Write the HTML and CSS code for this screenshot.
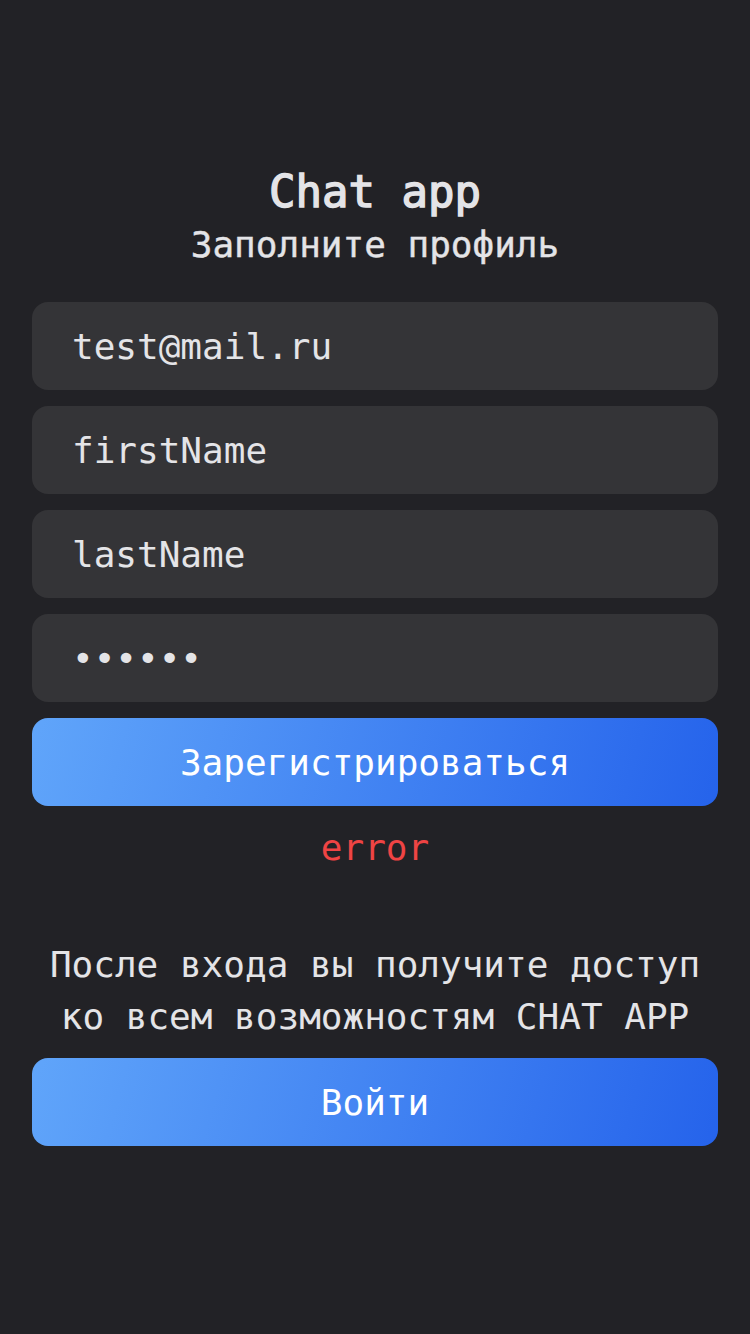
FILE: index.html
```html
<!DOCTYPE html>
<html lang="ru">
<head>
<meta charset="utf-8">
<title>Chat app</title>
<link rel="stylesheet" href="styles.css">
</head>
<body>
<main class="page">
  <form class="card">
    <h1 class="title">Chat app</h1>
    <h2 class="subtitle">Заполните профиль</h2>
    <div class="fields">
      <input class="field" type="text" value="test@mail.ru">
      <input class="field" type="text" value="firstName">
      <input class="field" type="text" value="lastName">
      <input class="field" type="password" value="123456">
      <button class="btn" type="button">Зарегистрироваться</button>
    </div>
    <p class="error">error</p>
    <p class="note">После входа вы получите доступ ко всем возможностям CHAT APP</p>
    <button class="btn btn-login" type="button">Войти</button>
  </form>
</main>
</body>
</html>
```
FILE: styles.css
```css
* { box-sizing: border-box; }
html, body {
  margin: 0;
  padding: 0;
  background: #222226;
}
body {
  font-family: "DejaVu Sans Mono", "Liberation Mono", monospace;
  color: #e4e4e7;
  min-height: 1334px;
}
.page {
  padding: 164px 32px 0;
}
.card {
  display: flex;
  flex-direction: column;
  margin: 0;
}
.title {
  margin: 0;
  font-size: 44px;
  line-height: 56px;
  font-weight: 400;
  -webkit-text-stroke: 1.4px #e4e4e7;
  text-align: center;
  color: #e4e4e7;
}
.subtitle {
  margin: 1px 0 0;
  font-size: 36px;
  line-height: 48px;
  font-weight: 400;
  -webkit-text-stroke: 0.4px #e4e4e7;
  text-align: center;
  color: #e4e4e7;
}
.fields {
  margin-top: 33px;
  display: flex;
  flex-direction: column;
  gap: 16px;
}
.field {
  display: block;
  width: 100%;
  height: 88px;
  border: none;
  outline: none;
  border-radius: 16px;
  background: #343437;
  color: #e4e4e7;
  font-family: "DejaVu Sans Mono", "Liberation Mono", monospace;
  font-size: 36px;
  padding: 0 40px;
  margin: 0;
}
.btn {
  display: block;
  width: 100%;
  height: 88px;
  border: none;
  border-radius: 16px;
  background: linear-gradient(105deg, #60a5fa 0%, #2563eb 100%);
  color: #ffffff;
  font-family: "DejaVu Sans Mono", "Liberation Mono", monospace;
  font-size: 36px;
  margin: 0;
  padding: 0;
}
.error {
  margin: 18px 0 0;
  font-size: 36px;
  line-height: 48px;
  text-align: center;
  color: #ef4444;
}
.note {
  margin: 67px 0 0;
  font-size: 36px;
  line-height: 52px;
  text-align: center;
  color: #e4e4e7;
}
.btn-login {
  margin-top: 15px;
}
```
